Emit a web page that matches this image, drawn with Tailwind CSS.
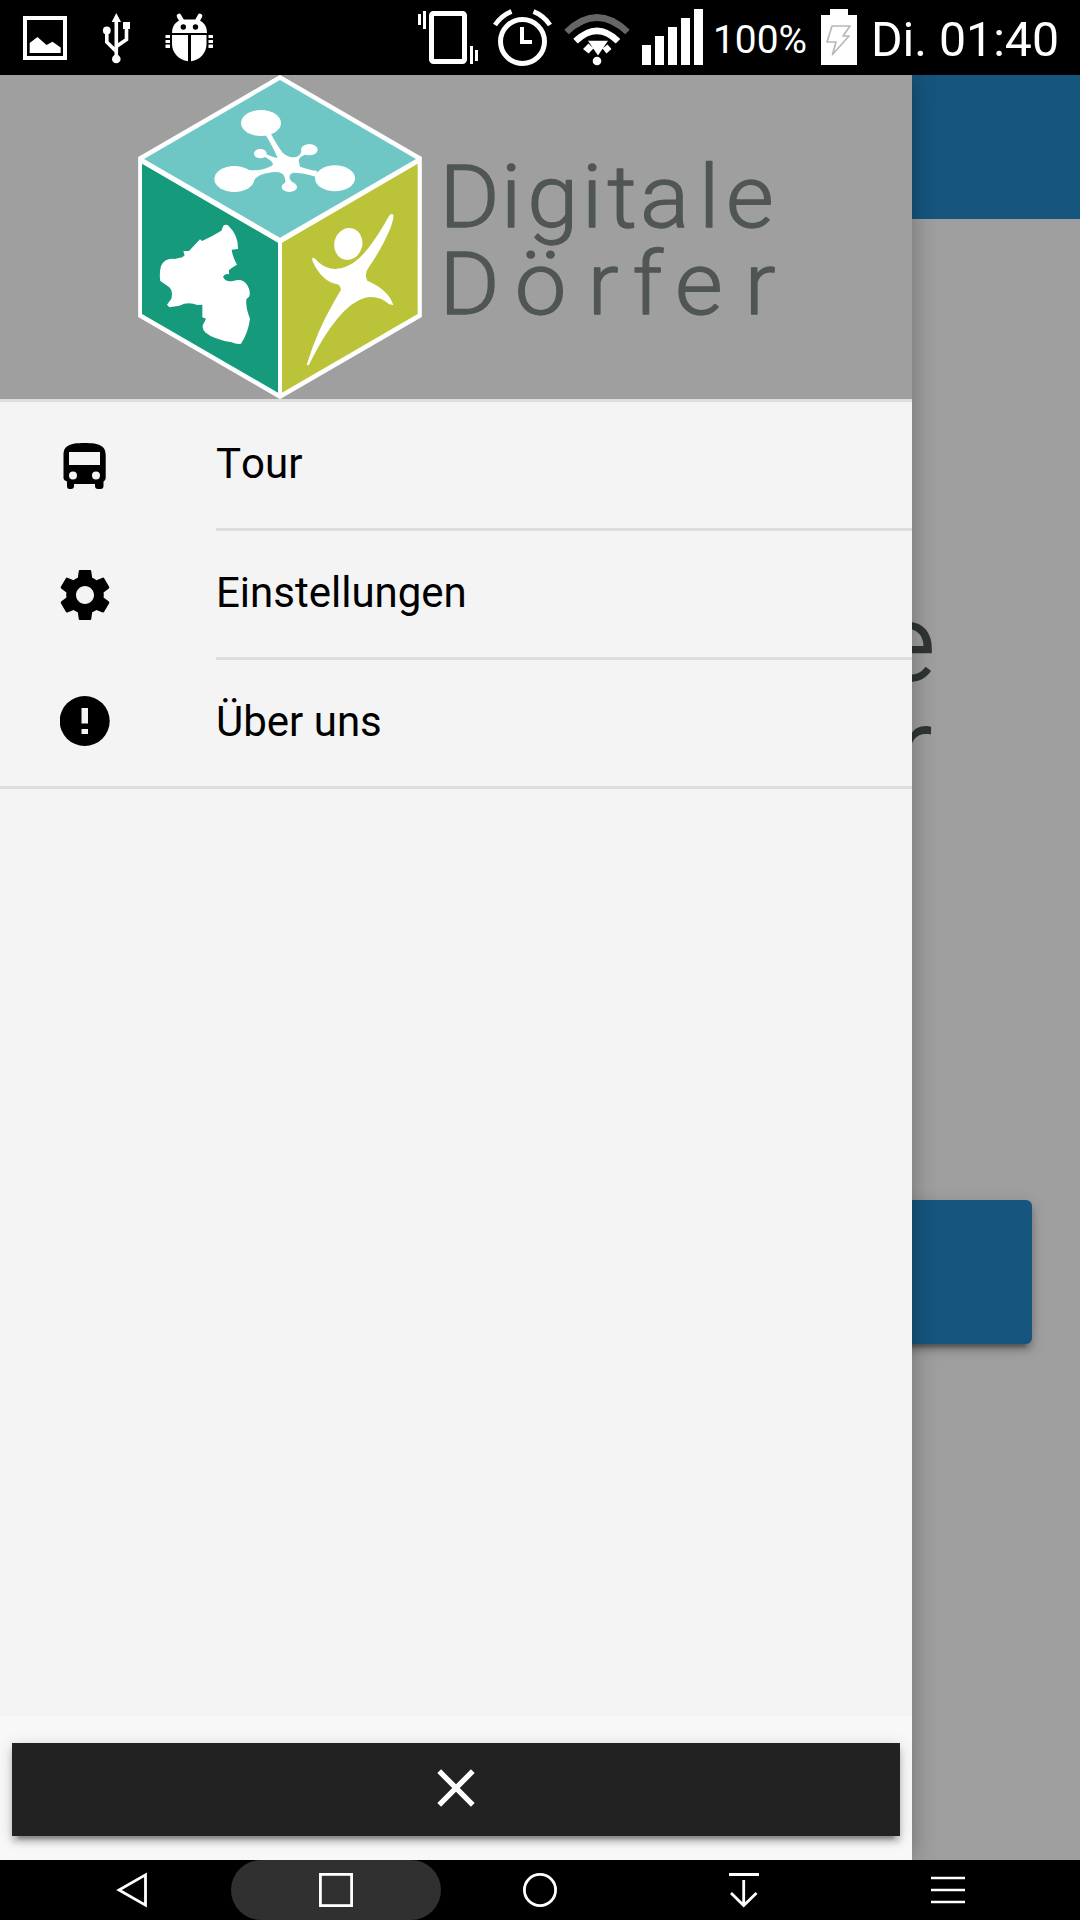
<!DOCTYPE html>
<html lang="de">
<head>
<meta charset="utf-8">
<title>Digitale Dörfer</title>
<script src="https://cdn.jsdelivr.net/npm/@tailwindcss/browser@4"></script>
</head>
<body class="w-[1080px] h-[1920px] overflow-hidden bg-black font-['Roboto',sans-serif]">
<div class="flex flex-col w-[1080px] h-[1920px]">
  <!-- status bar -->
  <header class="h-[75px] shrink-0 bg-black text-white flex">
    <svg class="w-[710px] h-[75px] shrink-0" viewBox="0 0 710 75" fill="#fff">
      <rect x="25" y="18" width="40" height="40" fill="none" stroke="#fff" stroke-width="4"/>
      <path d="M29.700 53V43L37.500 37L46.500 45L52.500 41.700L60.700 47.500V53Z"/>
      <path d="M116.300 13L121 22H111.700Z"/><circle cx="106.800" cy="30.500" r="3.900"/><rect x="123" y="22" width="7" height="7"/><circle cx="116.300" cy="59" r="4.300"/>
      <path d="M116.300 20V58M106.800 31V42L116.300 51.500M126.500 28V39.500L116.300 46.500" fill="none" stroke="#fff" stroke-width="3.600"/>
      <path d="M172 33C172 24 178 19.500 184 19.500H195C201 19.500 207 24 207 33Z"/>
      <path d="M179 16L183 23M200 16L196 23" stroke="#fff" stroke-width="4.600" stroke-linecap="round"/>
      <circle cx="183.300" cy="27" r="2.700" fill="#000"/><circle cx="195.500" cy="27" r="2.700" fill="#000"/>
      <path d="M172 35H188V61.300C179 60 172 53 172 44ZM191 35H206.500V44C206.500 53 200 60 191 61.300Z"/>
      <path d="M165.500 35H170V38H165.500ZM165.500 40H170V43H165.500ZM165.500 44.500H170V48H165.500ZM208.500 35H213V38H208.500ZM208.500 40H213V43H208.500ZM208.500 44.500H213V48H208.500Z"/>
      <rect x="431.500" y="13.500" width="33" height="48" rx="2" fill="none" stroke="#fff" stroke-width="5"/>
      <path d="M418 14H421V25H418ZM423 11H426V29H423ZM470 46H473V64H470ZM475 50H478V61H475Z"/>
      <circle cx="522.500" cy="41.500" r="22" fill="none" stroke="#fff" stroke-width="5"/>
      <path d="M522 27V42H532" fill="none" stroke="#fff" stroke-width="4"/>
      <path d="M495 25Q501.500 15.500 511.500 11.500M533.500 11.500Q543.500 15.500 550 25" fill="none" stroke="#fff" stroke-width="4.800"/>
      <path d="M566.500 32Q597 3 627.500 32" fill="none" stroke="#666" stroke-width="6.500"/>
      <path d="M575.500 41.200Q597 20.500 618 41.200" fill="none" stroke="#fff" stroke-width="6.500"/>
      <path d="M588 40.700H608L598 55.500ZM583 49L588.500 43.500L593.500 48.500L588.500 53.500ZM602.500 48.500L607.500 44.500L611.500 49L606.500 53.500Z"/><circle cx="597" cy="61" r="4.300"/>
      <path d="M642 45H651V65H642ZM655 36H664V65H655ZM668 27H677V65H668ZM681 18H690V65H681ZM694 9H703V65H694Z"/>
    </svg>
    <svg class="w-[370px] h-[75px] shrink-0" viewBox="710 0 370 75" fill="#fff">
      <text x="713" y="52.700" font-size="38.500" textLength="94" lengthAdjust="spacingAndGlyphs">100%</text>
      <path d="M821 15H830V9H848V15H857V65H821Z"/>
      <path d="M832 26H850L843 36H849L832.500 54.500L836 42H827Z" fill="none" stroke="#b8b8b8" stroke-width="1.700" stroke-linejoin="round"/>
      <text x="871" y="55.800" font-size="48" textLength="188" lengthAdjust="spacingAndGlyphs">Di. 01:40</text>
    </svg>
  </header>

  <main class="relative h-[1785px] bg-[#9f9f9f] overflow-hidden">
    <!-- dimmed page -->
    <div class="flex flex-col h-full">
      <div class="h-[144px] bg-[#15557e]"></div>
      <svg class="w-[1080px] h-[300px] mt-[281px]" viewBox="0 500 1080 300" font-family="Roboto" font-weight="300" fill="#303634" stroke="#303634" stroke-width="2">
        <text x="880" y="680" font-size="106">e</text>
        <text x="896" y="784" font-size="106">r</text>
      </svg>
      <div class="mx-12 mt-[400px] h-[144px] rounded-[6px] bg-[#15557e] shadow-[0_6px_6px_rgba(0,0,0,0.2),0_9px_3px_-6px_rgba(0,0,0,0.24),0_3px_15px_rgba(0,0,0,0.16)]"></div>
    </div>

    <!-- side menu -->
    <aside class="absolute left-0 top-0 w-[912px] h-full flex flex-col bg-[#f4f4f4] shadow-[0_0_24px_rgba(0,0,0,0.3)]">
      <div class="h-[327px] shrink-0 bg-[#9f9f9f] border-b-[3px] border-[#dedede]">
        <svg class="w-[912px] h-[324px]" viewBox="0 75 912 324">
          <g transform="translate(120 70) scale(.33333)">
            <path d="M480 22L899 265V737L480 980L61 737V265Z" fill="#fff" stroke="#fff" stroke-width="13"/>
            <path d="M480 30L888 267L480 503L72 267Z" fill="#6fc7c5"/>
            <path d="M66 281L474 518V968L66 732Z" fill="#159a7c"/>
            <path d="M893 281L486 518V968L893 732Z" fill="#bbc438"/>
            <g fill="#fff">
              <ellipse cx="423" cy="159" rx="60" ry="39"/><ellipse cx="343" cy="327" rx="60" ry="39"/><ellipse cx="645" cy="325" rx="60" ry="39"/>
              <ellipse cx="421" cy="251" rx="19" ry="14"/><ellipse cx="568" cy="239" rx="25" ry="17"/><ellipse cx="508" cy="351" rx="23" ry="15"/>
              <path d="M435 192L452 190Q470 225 488 248Q505 263 525 262Q541 259 546 239L558 253Q536 262 536 272L540 290Q570 300 592 303L586 320Q550 308 520 308Q505 312 510 328Q514 337 524 340L495 342Q499 325 489 313Q478 303 455 307Q408 313 401 335L382 299Q425 306 458 286Q462 274 433 260L437 252Q458 262 473 264Q459 230 435 192Z"/>
              <path d="M310 467Q318 461 326 468Q355 496 354 537L335 539Q338 562 351 584Q336 592 327 600V613Q315 609 309 620Q317 638 342 632Q370 625 382 646Q394 666 387 680L379 688Q377 715 390 746Q384 790 363 821Q352 824 335 817Q280 807 257 788Q241 773 253 757L258 746L247 742V704L232 705Q205 694 178 707L148 712L141 704L154 686Q160 662 148 652L121 633Q117 610 123 588Q135 563 164 567L187 562L194 556L190 543H207L240 508L246 513Q277 499 304 482Z"/>
              <ellipse cx="685" cy="522" rx="42" ry="48" transform="rotate(15 685 522)"/>
              <path d="M577 563Q584 562 594 575Q618 597 646 597Q683 596 718 564Q756 529 807 438Q814 428 820 434Q822 452 803 493Q784 537 745 594Q732 612 742 632Q806 660 820 705L808 703Q776 675 735 683Q655 705 566 886L560 885Q590 785 643 694L663 659Q661 646 650 642Q605 634 577 572Z"/>
            </g>
          </g>
          <g transform="scale(1.06 1)" font-family="Roboto" font-weight="300" fill="#4f5653" stroke="#4f5653" stroke-width="1.300" stroke-linejoin="round" font-size="87" text-anchor="middle">
            <text y="227.500" x="443 482.100 521.500 558.500 586.800 627 668.900 707.500">Digitale</text>
            <text y="314.500" x="443 509.900 569 611 659.300 717">Dörfer</text>
          </g>
        </svg>
      </div>

      <nav class="flex flex-col text-[42px] text-black border-b-[3px] border-[#dedede] [font-kerning:none]">
        <a class="flex h-[129px]">
          <svg class="ml-[60px] mt-[37px] w-[50px] h-[54px] mr-[106px] shrink-0" viewBox="60 439 50 54"><path fill-rule="evenodd" d="M63.500 455C63.500 446 69 443 84.500 443S105.700 446 105.700 455V478Q105.700 480 103.500 481.500V486Q103.500 489 100.500 489H98Q95 489 95 486V484H74V486Q74 489 71 489H69.500Q67 489 67 486V481.500Q63.500 480 63.500 478ZM69 452V465H100V452ZM73 471.500a4 4 0 100 8a4 4 0 100-8ZM96 471.500a4 4 0 100 8a4 4 0 100-8Z"/></svg>
          <span class="flex-1 border-b-[3px] border-[#dedede] flex items-center pb-1">Tour</span>
        </a>
        <a class="flex h-[129px]">
          <svg class="ml-[60px] mt-[39px] w-[50px] h-[50px] mr-[106px] shrink-0" viewBox="2 2 20 20"><path d="M19.430 12.980c.04-.32.070-.64.070-.98s-.03-.66-.07-.98l2.110-1.650c.19-.15.240-.42.120-.64l-2-3.460c-.12-.22-.39-.3-.61-.22l-2.490 1c-.52-.4-1.080-.73-1.690-.98l-.38-2.650C14.460 2.180 14.250 2 14 2h-4c-.25 0-.46.180-.49.420l-.38 2.650c-.61.250-1.170.590-1.690.980l-2.490-1c-.23-.09-.49 0-.61.220l-2 3.460c-.13.220-.07.490.120.640l2.110 1.650c-.04.320-.07.650-.07.980s.03.660.07.980l-2.110 1.650c-.19.150-.24.420-.12.640l2 3.460c.12.220.390.300.610.220l2.490-1c.52.400 1.080.730 1.690.980l.38 2.650c.03.240.240.420.490.420h4c.25 0 .46-.18.490-.42l.38-2.650c.61-.25 1.170-.59 1.690-.98l2.490 1c.23.090.490 0 .61-.22l2-3.460c.12-.22.070-.49-.12-.64l-2.110-1.650zM12 15.600c-1.980 0-3.600-1.620-3.600-3.600s1.620-3.600 3.600-3.600 3.600 1.620 3.600 3.600-1.620 3.600-3.600 3.600z"/></svg>
          <span class="flex-1 border-b-[3px] border-[#dedede] flex items-center pb-1">Einstellungen</span>
        </a>
        <a class="flex h-[126px]">
          <svg class="ml-[60px] mt-[36px] w-[50px] h-[50px] mr-[106px] shrink-0" viewBox="0 0 50 50"><path fill-rule="evenodd" d="M24.700 0a25 25 0 100 50a25 25 0 100-50ZM21.500 12H28V27.500H21.500ZM21.500 33H28V38H21.500Z"/></svg>
          <span class="flex-1 flex items-center pb-1">Über uns</span>
        </a>
      </nav>

      <footer class="mt-auto h-[144px] px-3 pt-[27px] bg-[#f8f8f8]">
        <button class="flex items-center justify-center w-full h-[93px] pb-[3px] bg-[#222] shadow-[0_6px_6px_rgba(0,0,0,0.2),0_9px_3px_-6px_rgba(0,0,0,0.24),0_3px_15px_rgba(0,0,0,0.16)]">
          <svg class="w-[64px] h-[64px]" viewBox="0 0 24 24" fill="#fff"><path d="M19 6.400L17.600 5 12 10.600 6.400 5 5 6.400 10.600 12 5 17.600 6.400 19 12 13.400 17.600 19 19 17.600 13.400 12z"/></svg>
        </button>
      </footer>
    </aside>
  </main>

  <!-- navigation bar -->
  <footer class="h-[60px] shrink-0 bg-black flex">
    <svg class="w-[1080px] h-[60px]" viewBox="0 1860 1080 60" fill="none" stroke="#fff" stroke-width="2.800">
      <rect x="231" y="1860" width="210" height="60" rx="30" fill="#303030" stroke="none"/>
      <path d="M145.500 1874.800V1905.200L119 1890Z"/>
      <rect x="320.400" y="1874.400" width="31.200" height="31.200"/>
      <circle cx="540" cy="1890" r="15.600"/>
      <path d="M729 1874.500H759M743.700 1880V1905M731 1893L743.700 1905.500L756.500 1893"/>
      <path d="M931 1878H965M931 1890H965M931 1902H965" stroke-width="2.400"/>
    </svg>
  </footer>
</div>
</body>
</html>
